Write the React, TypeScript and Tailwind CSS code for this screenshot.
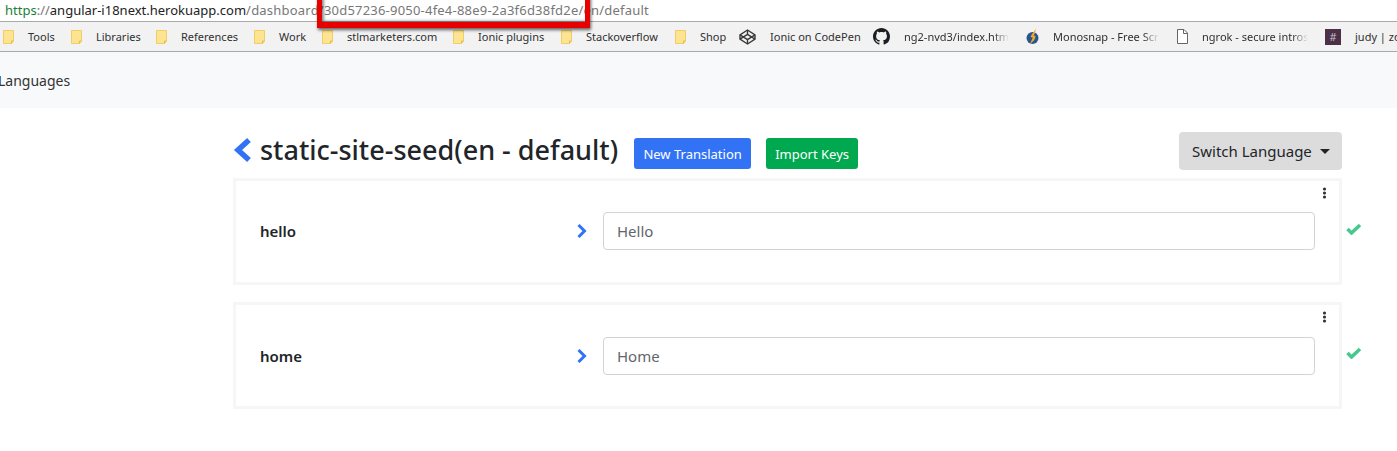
const font = "font-['Noto_Sans','Open_Sans',sans-serif]";

function Folder() {
  return (
    <svg width="11" height="14" viewBox="0 0 11 14" className="ml-[1px] shrink-0">
      <path d="M0.500 0.500h10v11l-2 2h-8z" fill="#fde490" stroke="#f1cd66" />
      <path d="M8.500 13.500v-2.500h2" fill="none" stroke="#e2bd58" />
    </svg>
  );
}

function CodepenIcon() {
  return (
    <svg width="17" height="16" viewBox="0 0 17 16" fill="none" stroke="#3a3a3a" strokeWidth="1.400" className="shrink-0">
      <path d="M8.500 1l7.500 4.800v4.400L8.500 15 1 10.200V5.800z" />
      <path d="M8.500 1v4.400M8.500 10.600V15M1 5.800l7.500 4.800L16 5.800M1 10.200l7.500-4.800 7.500 4.800" />
    </svg>
  );
}

function GithubIcon() {
  return (
    <svg width="17" height="17" viewBox="0 0 16 16" fill="#1b1f23" className="shrink-0">
      <path d="M8 0C3.580 0 0 3.580 0 8c0 3.540 2.290 6.530 5.470 7.590.4.070.55-.17.55-.38 0-.19-.01-.82-.01-1.490-2.010.37-2.530-.49-2.690-.94-.09-.23-.48-.94-.82-1.130-.28-.15-.68-.52-.01-.53.63-.01 1.080.58 1.230.82.72 1.210 1.870.87 2.330.66.07-.52.28-.87.51-1.070-1.780-.2-3.640-.89-3.640-3.950 0-.87.31-1.590.82-2.150-.08-.2-.36-1.020.08-2.120 0 0 .67-.21 2.200.82.64-.18 1.320-.27 2-.27s1.360.09 2 .27c1.530-1.040 2.200-.82 2.200-.82.44 1.100.16 1.920.08 2.120.51.56.82 1.270.82 2.150 0 3.070-1.870 3.750-3.650 3.950.29.25.54.73.54 1.480 0 1.070-.01 1.930-.01 2.200 0 .21.15.46.55.38A8.010 8.010 0 0 0 16 8c0-4.420-3.580-8-8-8z" />
    </svg>
  );
}

function MonosnapIcon() {
  return (
    <svg width="13" height="17" viewBox="0 0 13 17" className="shrink-0">
      <circle cx="6.500" cy="10" r="6" fill="#27568f" />
      <path d="M9.500 0.500C9 3 5.500 6 4.500 9l2.300 0.500L4 16c3-2 5.500-5 5.500-8L7.600 7.600C9 5.500 10 3 9.500 0.500z" fill="#f2a62e" />
    </svg>
  );
}

function DocIcon() {
  return (
    <svg width="11" height="15" viewBox="0 0 11 15" fill="#fff" stroke="#666" className="shrink-0">
      <path d="M0.500 0.500h6.500l3.500 3.500v10.500h-10z" />
      <path d="M6.500 0.500v4h4" fill="none" />
    </svg>
  );
}

function SlackIcon() {
  return (
    <span className="flex h-4 w-4 shrink-0 items-center justify-center bg-[#4a3148] text-[11px] leading-none text-[#c9bcc8]">#</span>
  );
}

const bookmarks = [
  { icon: <Folder />, label: 'Tools', w: 'w-[68px]', fade: false },
  { icon: <Folder />, label: 'Libraries', w: 'w-[85px]', fade: false },
  { icon: <Folder />, label: 'References', w: 'w-[98px]', fade: false },
  { icon: <Folder />, label: 'Work', w: 'w-[68px]', fade: false },
  { icon: <Folder />, label: 'stlmarketers.com', w: 'w-[131px]', fade: false },
  { icon: <Folder />, label: 'Ionic plugins', w: 'w-[108px]', fade: false },
  { icon: <Folder />, label: 'Stackoverflow', w: 'w-[114px]', fade: false },
  { icon: <Folder />, label: 'Shop', w: 'w-[65px]', fade: false },
  { icon: <CodepenIcon />, label: 'Ionic on CodePen', w: 'w-[134px]', fade: false },
  { icon: <GithubIcon />, label: 'ng2-nvd3/index.htm', w: 'w-[153px]', fade: true },
  { icon: <MonosnapIcon />, label: 'Monosnap - Free Scr', w: 'w-[151px]', fade: true },
  { icon: <DocIcon />, label: 'ngrok - secure intros', w: 'w-[148px]', fade: true },
  { icon: <SlackIcon />, label: 'judy | zo', w: 'w-[70px]', fade: false },
];

function BookmarkBar() {
  return (
    <div className="flex h-[30px] items-center overflow-hidden border-b border-[#a9a9a9] bg-[#f2f2f2] pl-[2px] text-[11px] text-[#303030]">
      {bookmarks.map((b) => (
        <div key={b.label} className={`flex shrink-0 items-center gap-[14px] ${b.w}`}>
          {b.icon}
          <span
            className={
              b.fade
                ? 'mt-[1px] whitespace-nowrap [mask-image:linear-gradient(to_right,black_85%,transparent_100%)]'
                : 'mt-[1px] whitespace-nowrap'
            }
          >
            {b.label}
          </span>
        </div>
      ))}
    </div>
  );
}

function KeyRow({ name, value, nudge }: { name: string; value: string; nudge: string }) {
  return (
    <div className="flex w-[1130px] items-center">
      <div className={`relative flex h-[107px] w-[1109px] shrink-0 items-center border-[3px] border-[#f6f6f7] px-[24px] ${nudge}`}>
        <svg width="5" height="12" viewBox="0 0 5 12" fill="#333" className="absolute top-[6px] right-[12px]">
          <circle cx="2.500" cy="2" r="1.600" />
          <circle cx="2.500" cy="6" r="1.600" />
          <circle cx="2.500" cy="10" r="1.600" />
        </svg>
        <span className="w-[316px] text-[15px] font-semibold text-[#212529]">{name}</span>
        <svg width="12" height="14" viewBox="0 0 12 14" fill="none" stroke="#3273f6" strokeWidth="3" className="mr-[15px] shrink-0">
          <path d="M2.500 1 8.500 7l-6 6" />
        </svg>
        <input
          readOnly
          value={value}
          className="h-[38px] flex-1 rounded-[4px] border border-[#ced4da] bg-white px-[13px] text-[15px] text-[#5f666d] outline-none"
        />
      </div>
      <svg width="16" height="12" viewBox="0 0 16 12" fill="none" stroke="#48c78e" strokeWidth="3.500" className="mb-[6px] ml-[4px] shrink-0">
        <path d="M1.500 6 5.500 10 14 2" />
      </svg>
    </div>
  );
}

export default function App() {
  return (
    <div className={`relative h-[451px] w-[1397px] overflow-hidden bg-white ${font}`}>
      {/* browser chrome */}
      <div className="flex h-[22px] items-center whitespace-nowrap border-b border-[#a9a9a9] bg-white pl-[5px] text-[13px] text-[#777]">
        <span className="text-[#1a7f37]">https</span>
        <span>://</span>
        <span className="text-[#222]">angular-i18next.herokuapp.com</span>
        <span className="tracking-[0.21px]">/dashboard/30d57236-9050-4fe4-88e9-2a3f6d38fd2e/en/default</span>
      </div>
      <BookmarkBar />

      {/* red annotation over the url */}
      <div className="absolute top-[-8px] left-[317px] h-[36px] w-[273px] border-x-[5px] border-b-[6px] border-[#e60000] shadow-[1px_2px_3px_rgba(0,0,0,0.6),inset_2px_-1px_3px_rgba(0,0,0,0.45)]" />

      <nav className="flex h-[56px] items-center bg-[#f8f9fa] text-[14px] text-[#333]">
        <span className="-ml-[2px]">Languages</span>
      </nav>

      <main className="ml-[233px] flex flex-col">
        <div className="flex h-[70px] w-[1109px] items-start">
          <div className="mt-[24px] flex items-center">
            <svg width="20" height="26" viewBox="0 0 20 26" fill="none" stroke="#3273f6" strokeWidth="5.500" className="shrink-0">
              <path d="M16 3 5 13l11 10" />
            </svg>
            <h1 className="ml-[7px] text-[27px] leading-[36px] font-medium whitespace-nowrap text-[#212529]">
              static-site-seed(en - default)
            </h1>
          </div>
          <button className="mt-[30px] ml-[16px] h-[31px] w-[117px] rounded-[3px] bg-[#3273f6] pt-[2px] text-[13px] text-white">New Translation</button>
          <button className="mt-[30px] ml-[15px] h-[31px] w-[92px] rounded-[3px] bg-[#00a94f] pt-[2px] text-[13px] text-white">Import Keys</button>
          <button className="mt-[24px] ml-auto flex h-[38px] w-[163px] items-center gap-[8px] rounded-[4px] bg-[#dcdcdc] pl-[13px] text-[15px] text-[#212529]">
            Switch Language
            <span className="h-0 w-0 border-x-[5px] border-t-[5px] border-x-transparent border-t-[#212529]" />
          </button>
        </div>
        <div className="flex flex-col gap-[17px]">
          <KeyRow name="hello" value="Hello" nudge="pb-[1px]" />
          <KeyRow name="home" value="Home" nudge="pt-[1px]" />
        </div>
      </main>
    </div>
  );
}
